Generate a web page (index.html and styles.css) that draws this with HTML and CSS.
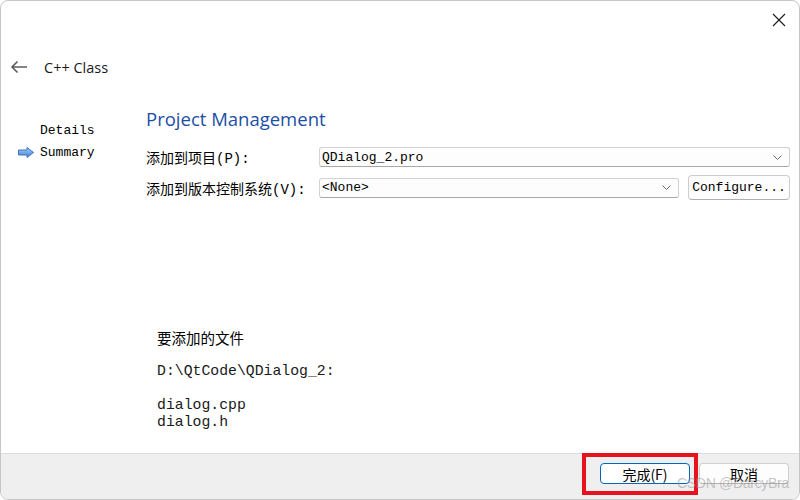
FILE: index.html
```html
<!DOCTYPE html>
<html>
<head>
<meta charset="utf-8">
<link rel="stylesheet" href="styles.css">
</head>
<body>
<div class="dialog">
  <div class="titlebar">
    <svg class="close" width="14" height="14" viewBox="0 0 14 14"><path d="M1 1 L13 13 M13 1 L1 13" stroke="#1a1a1a" stroke-width="1.1" fill="none"/></svg>
  </div>
  <div class="backrow">
    <svg class="back" width="18" height="14" viewBox="0 0 18 14"><path d="M17 7 H2 M7.5 1.5 L2 7 L7.5 12.5" stroke="#5c5c5c" stroke-width="1.6" fill="none"/></svg>
    <span class="wizard-title">C++ Class</span>
  </div>
  <div class="main">
    <nav class="steps">
      <div class="step"><span class="slot"></span><span>Details</span></div>
      <div class="step"><span class="slot"><svg width="16" height="11" viewBox="0 0 16 11"><defs><linearGradient id="g" x1="0" y1="0" x2="0" y2="1"><stop offset="0" stop-color="#a9cdf5"/><stop offset="1" stop-color="#3d82d8"/></linearGradient></defs><path d="M0.5 3 H9 V0.5 L15.5 5.5 L9 10.5 V8 H0.5 Z" fill="url(#g)" stroke="#3b74c0" stroke-width="1"/></svg></span><span>Summary</span></div>
    </nav>
    <section class="page">
      <h1 class="page-title">Project Management</h1>
      <div class="form">
        <label class="lbl">添加到项目(P):</label>
        <div class="combo wide"><span>QDialog_2.pro</span><svg class="chev" width="9" height="5" viewBox="0 0 9 5"><path d="M0.5 0.5 L4.5 4.5 L8.5 0.5" stroke="#6a6a6a" stroke-width="1" fill="none"/></svg></div>
        <label class="lbl">添加到版本控制系统(V):</label>
        <div class="combo"><span>&lt;None&gt;</span><svg class="chev" width="9" height="5" viewBox="0 0 9 5"><path d="M0.5 0.5 L4.5 4.5 L8.5 0.5" stroke="#6a6a6a" stroke-width="1" fill="none"/></svg></div>
        <button class="cfg">Configure...</button>
      </div>
      <div class="files">
        <div class="files-head">要添加的文件</div>
        <pre class="files-list">D:\QtCode\QDialog_2:

dialog.cpp
dialog.h</pre>
      </div>
    </section>
  </div>
  <div class="footer">
    <button class="btn primary">完成(F)</button>
    <button class="btn">取消</button>
  </div>
</div>
<div class="annot"></div>
<div class="watermark">CSDN @DarcyBra</div>
</body>
</html>
```
FILE: styles.css
```css
html, body {
  margin: 0;
  padding: 0;
  background: #ffffff;
}
body {
  width: 800px;
  height: 500px;
  position: relative;
  overflow: hidden;
  font-family: "Noto Sans", "Noto Sans CJK SC", sans-serif;
}
.dialog {
  box-sizing: border-box;
  width: 800px;
  height: 500px;
  border: 1px solid #c6c6c6;
  border-radius: 8px;
  overflow: hidden;
  display: flex;
  flex-direction: column;
  background: #ffffff;
}
.titlebar {
  height: 35px;
  display: flex;
  justify-content: flex-end;
  align-items: center;
  padding-right: 13px;
  flex: none;
}
.close {
  display: block;
  margin-top: 2px;
}
.backrow {
  height: 62px;
  display: flex;
  align-items: center;
  flex: none;
}
.back {
  margin-left: 9px;
  display: block;
}
.wizard-title {
  margin-left: 16px;
  font-family: "Open Sans", "Noto Sans", sans-serif;
  font-size: 14.5px;
  color: #1a1a1a;
}
.main {
  flex: 1;
  display: flex;
  min-height: 0;
}
.steps {
  width: 145px;
  flex: none;
  padding-top: 21px;
  font-family: "Liberation Mono", "Noto Sans CJK SC", monospace;
  font-size: 13px;
  color: #000;
}
.step {
  display: flex;
  align-items: center;
  height: 22px;
  padding-left: 17px;
}
.slot {
  width: 22px;
  display: flex;
  align-items: center;
}
.slot svg { display: block; }
.page {
  flex: 1;
  padding-right: 9px;
  display: flex;
  flex-direction: column;
}
.page-title {
  margin: 0;
  padding-top: 8px;
  height: 26px;
  line-height: 26px;
  font-family: "Open Sans", "Noto Sans", sans-serif;
  font-weight: normal;
  font-size: 18.5px;
  color: #1b4fa6;
  margin-bottom: 15px;
}
.form {
  display: grid;
  grid-template-columns: 164px 1fr 102px;
  column-gap: 9px;
  row-gap: 8px;
  align-items: center;
}
.lbl {
  font-family: "Liberation Mono", "Noto Sans CJK SC", monospace;
  font-size: 14px;
  color: #000;
  white-space: nowrap;
}
.combo {
  box-sizing: border-box;
  height: 20px;
  border: 1px solid #d3d3d3;
  border-bottom-color: #a8a8a8;
  border-radius: 3px;
  background: #fdfdfd;
  display: flex;
  align-items: center;
  justify-content: space-between;
  padding: 0 7px 0 2px;
  font-family: "Liberation Mono", monospace;
  font-size: 13px;
  color: #000;
}
.combo.wide {
  grid-column: 2 / 4;
}
.chev { display: block; }
.cfg {
  box-sizing: border-box;
  height: 25px;
  border: 1px solid #cdcdcd;
  border-bottom-color: #b0b0b0;
  border-radius: 4px;
  background: #fdfdfd;
  font-family: "Liberation Mono", monospace;
  font-size: 13px;
  color: #000;
  padding: 0;
}
.files {
  margin-top: 128px;
  padding-left: 11px;
}
.files-head {
  height: 20px;
  line-height: 20px;
  font-family: "Noto Sans CJK SC", sans-serif;
  font-size: 14.5px;
  color: #000;
}
.files-list {
  margin: 14.5px 0 0 0;
  font-family: "Liberation Mono", monospace;
  font-size: 14.8px;
  line-height: 17px;
  color: #1a1a1a;
}
.footer {
  flex: none;
  height: 36px;
  border-top: 1px solid #dcdcdc;
  background: #efefef;
  display: flex;
  justify-content: flex-end;
  align-items: flex-start;
  padding: 9px 10px 0 0;
  gap: 9px;
}
.btn {
  box-sizing: border-box;
  width: 90px;
  height: 21px;
  border: 1px solid #cfcfcf;
  border-bottom-color: #b3b3b3;
  border-radius: 4px;
  background: #fdfdfd;
  font-family: "Noto Sans CJK SC", sans-serif;
  font-size: 14px;
  line-height: 18px;
  color: #000;
  padding: 0;
}
.btn.primary {
  border: 1px solid #0067c0;
  background: #ffffff;
}
.annot {
  position: absolute;
  left: 582px;
  top: 453px;
  width: 116px;
  height: 42px;
  box-sizing: border-box;
  border: 4px solid #e8121e;
}
.watermark {
  position: absolute;
  left: 677px;
  top: 475px;
  font-family: "Liberation Sans", sans-serif;
  font-size: 14px;
  color: rgba(150, 150, 150, 0.55);
  letter-spacing: -0.3px;
}
```
